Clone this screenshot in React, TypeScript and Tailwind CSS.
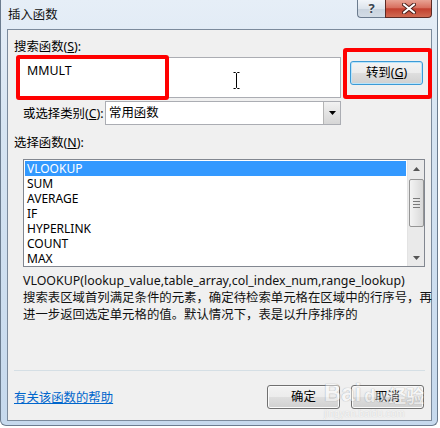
import type React from "react"

const font = "font-['Noto_Sans','Noto_Sans_CJK_SC',sans-serif]"

const Btn: React.FC<{ children: React.ReactNode; focus?: boolean; className?: string }> = ({ children, focus, className }) => (
  <div
    className={`flex items-center justify-center rounded-[3px] border ${
      focus ? "border-[#3c9ad6] shadow-[inset_0_0_0_1px_#b9e4fb]" : "border-[#707070] shadow-[inset_0_0_0_1px_#fbfbfb]"
    } bg-[linear-gradient(#f3f3f3_0%,#ececec_48%,#dedede_52%,#d0d0d0_100%)] text-[12.4px] leading-none text-black ${className ?? ""}`}
  >
    {children}
  </div>
)

const items = ["VLOOKUP", "SUM", "AVERAGE", "IF", "HYPERLINK", "COUNT", "MAX"]

export default function App() {
  return (
    <div className={`w-[440px] h-[428px] bg-white ${font} text-[12.4px] text-black`}>
      <div className="relative w-[438px] h-[426px] rounded-b-[6px] border border-t-0 border-[#6b7c8f] bg-[linear-gradient(180deg,#e6eef7_0%,#d6e4f2_30%,#c6d9ed_100%)] flex flex-col">
        {/* title bar */}
        <div className="h-[29px] flex items-start justify-between pl-[7px] pr-[5px]">
          <div className="pt-[7px] leading-[15px] text-[12.4px] text-[#111]">插入函数</div>
          <div className="flex">
            <div className="w-[28px] h-[18px] flex items-center justify-center border border-t-0 border-r-0 border-[#6b7b8e] rounded-bl-[4px] bg-[linear-gradient(#f2f5f9_0%,#dde4ec_50%,#c9d3de_52%,#d3dce6_100%)] text-[13px] font-bold leading-none text-[#38434f] [text-shadow:0_0_2px_#fff]">
              ?
            </div>
            <div className="w-[47px] h-[18px] flex items-center justify-center border border-t-0 border-[#5c2a24] rounded-br-[4px] bg-[linear-gradient(#e8a394_0%,#d8705f_45%,#c2402f_52%,#d06a52_100%)]">
              <svg width="14" height="11" viewBox="0 0 14 11">
                <path d="M2 1.5 L12 9.5 M12 1.5 L2 9.5" stroke="#4a1f1a" strokeWidth="4" strokeLinecap="round" />
                <path d="M2 1.5 L12 9.5 M12 1.5 L2 9.5" stroke="#fff" strokeWidth="2.2" strokeLinecap="round" />
              </svg>
            </div>
          </div>
        </div>

        {/* client panel */}
        <div className="ml-[6px] w-[425px] h-[392px] border border-[#7b8a9c] bg-[#f0f0f0] flex flex-col">
          <div className="mt-[9px] ml-[6px] leading-[15px]">
            搜索函数(<span className="underline">S</span>):
          </div>

          <div className="mt-[3px] flex h-[41px]">
            <div className="ml-[9px] w-[324px] h-[41px] border border-[#abadb3] bg-white pl-[9px] pt-[5px] leading-[15px] text-[12.4px]">
              MMULT
            </div>
            <Btn focus className="ml-[9px] mt-[4px] w-[73px] h-[24px]">
              转到(<span className="underline">G</span>)
            </Btn>
          </div>

          <div className="mt-[3px] flex items-center h-[24px]">
            <div className="ml-[15px] w-[82px] leading-[15px] whitespace-nowrap">
              或选择类别(<span className="underline">C</span>):
            </div>
            <div className="w-[236px] h-[24px] border border-[#abadb3] bg-white flex">
              <div className="flex-1 pl-[3px] pt-[3px] leading-[15px]">常用函数</div>
              <div className="w-[17px] h-full border-l border-[#b5b5b5] bg-[linear-gradient(#f2f2f2,#e3e3e3_50%,#d6d6d6)] flex items-center justify-center">
                <svg width="7" height="4" viewBox="0 0 7 4">
                  <path d="M0 0 H7 L3.5 4 Z" fill="#000" />
                </svg>
              </div>
            </div>
          </div>

          <div className="mt-[10px] ml-[6px] leading-[15px]">
            选择函数(<span className="underline">N</span>):
          </div>

          <div className="mt-[9px] ml-[15px] w-[402px] h-[108px] border border-[#828790] bg-white flex">
            <div className="flex-1 p-[1px]">
              {items.map((it, i) => (
                <div
                  key={it}
                  className={`h-[15px] pl-[2px] leading-[15px] text-[12px] ${i === 0 ? "bg-[#3399ff] text-white" : "text-black"}`}
                >
                  {it}
                </div>
              ))}
            </div>
            <div className="w-[17px] h-full bg-[#eaeaea] border-l border-[#e3e3e3] flex flex-col items-center">
              <div className="h-[17px] w-full flex items-center justify-center">
                <svg width="7" height="4" viewBox="0 0 7 4">
                  <path d="M0 4 H7 L3.5 0 Z" fill="#555" />
                </svg>
              </div>
              <div className="mt-[2px] w-[15px] h-[48px] rounded-[2px] border border-[#959595] bg-[linear-gradient(90deg,#f3f3f3,#e6e6e6_50%,#d8d8d8)] flex flex-col items-center justify-center gap-[2px]">
                <div className="w-[7px] h-px bg-[#7a7a7a]" />
                <div className="w-[7px] h-px bg-[#7a7a7a]" />
                <div className="w-[7px] h-px bg-[#7a7a7a]" />
                <div className="w-[7px] h-px bg-[#7a7a7a]" />
              </div>
              <div className="flex-1" />
              <div className="h-[17px] w-full flex items-center justify-center">
                <svg width="7" height="4" viewBox="0 0 7 4">
                  <path d="M0 0 H7 L3.5 4 Z" fill="#555" />
                </svg>
              </div>
            </div>
          </div>

          <div className="mt-[5px] ml-[15px] leading-[17px] text-[#111] whitespace-nowrap">
            <div>VLOOKUP(lookup_value,table_array,col_index_num,range_lookup)</div>
            <div>搜索表区域首列满足条件的元素，确定待检索单元格在区域中的行序号，再</div>
            <div>进一步返回选定单元格的值。默认情况下，表是以升序排序的</div>
          </div>

          <div className="mt-[47px] ml-[6px] w-[411px] h-px bg-[#d5dfe5]" />

          <div className="mt-[14px] flex items-center h-[24px]">
            <div className="ml-[6px] flex-1 leading-[15px] text-[#0066cc] underline">有关该函数的帮助</div>
            <Btn className="w-[73px] h-[24px]">确定</Btn>
            <Btn className="ml-[11px] mr-[7px] w-[73px] h-[24px]">取消</Btn>
          </div>
        </div>

        {/* annotation boxes */}
        <div className="absolute left-[15px] top-[55px] w-[153px] h-[45px] border-[4px] border-[#ff0000] rounded-[3px]" />
        <div className="absolute left-[342px] top-[48px] w-[89px] h-[51px] border-[4px] border-[#ff0000] rounded-[3px]" />

        {/* text cursor */}
        <svg className="absolute left-[232px] top-[72px]" width="7" height="17" viewBox="0 0 7 17">
          <path d="M0.5 0.5 H2.5 L3.5 1.5 L4.5 0.5 H6.5 M3.5 1.5 V15.5 M0.5 16.5 H2.5 L3.5 15.5 L4.5 16.5 H6.5" stroke="#000" strokeWidth="1" fill="none" />
        </svg>

        {/* watermark */}
        <div className="pointer-events-none absolute left-[323px] top-[381px] flex items-end text-white opacity-45 [text-shadow:0_0_1px_#777,0_0_1px_#777]">
          <span className="text-[24px] font-bold leading-none font-['Liberation_Sans',sans-serif]">Bai</span>
          <span className="ml-[3px] text-[18px] font-bold leading-none font-['Liberation_Sans',sans-serif]">du</span>
          <span className="ml-[2px] text-[18px] font-bold leading-none">经验</span>
        </div>
        <div className="pointer-events-none absolute left-[323px] top-[409px] text-[10px] leading-none text-white opacity-45 [text-shadow:0_0_1px_#888] font-['Liberation_Sans',sans-serif]">
          jingyan.baidu.com
        </div>
      </div>
    </div>
  )
}
